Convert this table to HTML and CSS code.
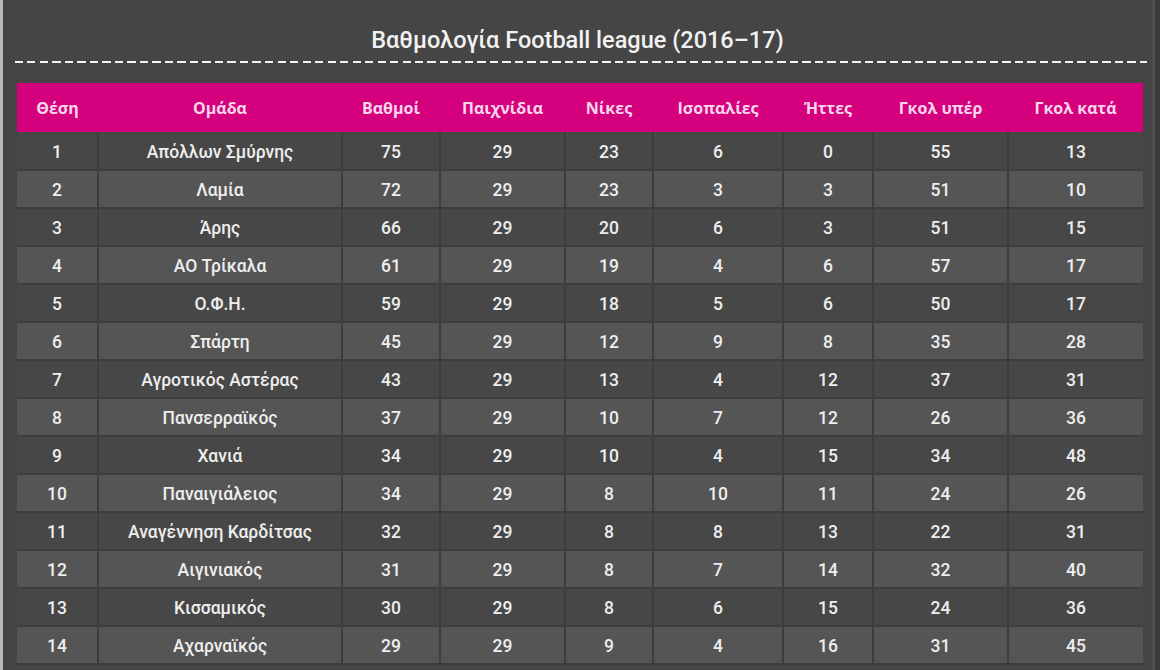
FILE: index.html
```html
<!DOCTYPE html>
<html lang="el">
<head>
<meta charset="utf-8">
<title>Βαθμολογία Football league (2016–17)</title>
<link rel="stylesheet" href="styles.css">
</head>
<body>
<div class="page">
  <h1 class="title">Βαθμολογία Football league (2016–17)</h1>
  <div class="dashes"></div>
  <table class="standings">
    <colgroup>
      <col class="c-pos"><col class="c-team"><col class="c-pts"><col class="c-gp"><col class="c-w"><col class="c-d"><col class="c-l"><col class="c-gf"><col class="c-ga">
    </colgroup>
    <thead>
      <tr><th>Θέση</th><th>Ομάδα</th><th>Βαθμοί</th><th>Παιχνίδια</th><th>Νίκες</th><th>Ισοπαλίες</th><th>Ήττες</th><th>Γκολ υπέρ</th><th>Γκολ κατά</th></tr>
    </thead>
    <tbody>
      <tr><td>1</td><td>Απόλλων Σμύρνης</td><td>75</td><td>29</td><td>23</td><td>6</td><td>0</td><td>55</td><td>13</td></tr>
      <tr><td>2</td><td>Λαμία</td><td>72</td><td>29</td><td>23</td><td>3</td><td>3</td><td>51</td><td>10</td></tr>
      <tr><td>3</td><td>Άρης</td><td>66</td><td>29</td><td>20</td><td>6</td><td>3</td><td>51</td><td>15</td></tr>
      <tr><td>4</td><td>ΑΟ Τρίκαλα</td><td>61</td><td>29</td><td>19</td><td>4</td><td>6</td><td>57</td><td>17</td></tr>
      <tr><td>5</td><td>Ο.Φ.Η.</td><td>59</td><td>29</td><td>18</td><td>5</td><td>6</td><td>50</td><td>17</td></tr>
      <tr><td>6</td><td>Σπάρτη</td><td>45</td><td>29</td><td>12</td><td>9</td><td>8</td><td>35</td><td>28</td></tr>
      <tr><td>7</td><td>Αγροτικός Αστέρας</td><td>43</td><td>29</td><td>13</td><td>4</td><td>12</td><td>37</td><td>31</td></tr>
      <tr><td>8</td><td>Πανσερραϊκός</td><td>37</td><td>29</td><td>10</td><td>7</td><td>12</td><td>26</td><td>36</td></tr>
      <tr><td>9</td><td>Χανιά</td><td>34</td><td>29</td><td>10</td><td>4</td><td>15</td><td>34</td><td>48</td></tr>
      <tr><td>10</td><td>Παναιγιάλειος</td><td>34</td><td>29</td><td>8</td><td>10</td><td>11</td><td>24</td><td>26</td></tr>
      <tr><td>11</td><td>Αναγέννηση Καρδίτσας</td><td>32</td><td>29</td><td>8</td><td>8</td><td>13</td><td>22</td><td>31</td></tr>
      <tr><td>12</td><td>Αιγινιακός</td><td>31</td><td>29</td><td>8</td><td>7</td><td>14</td><td>32</td><td>40</td></tr>
      <tr><td>13</td><td>Κισσαμικός</td><td>30</td><td>29</td><td>8</td><td>6</td><td>15</td><td>24</td><td>36</td></tr>
      <tr><td>14</td><td>Αχαρναϊκός</td><td>29</td><td>29</td><td>9</td><td>4</td><td>16</td><td>31</td><td>45</td></tr>
    </tbody>
  </table>
</div>
</body>
</html>
```

FILE: styles.css
```css
html, body {
  margin: 0;
  padding: 0;
  background: #3c3c3c;
}

.page {
  box-sizing: border-box;
  width: 1155px;
  height: 670px;
  overflow: hidden;
  background: #454545;
  border-left: 3px solid #b9b9b9;
  border-right: 3px solid #505050;
  font-family: Roboto, "Liberation Sans", sans-serif;
  color: #e8e8e8;
}

.title {
  margin: 0;
  padding-top: 24px;
  line-height: 32px;
  font-size: 23.5px;
  font-weight: 500;
  text-align: center;
  color: #f2f2f2;
}

.dashes {
  margin: 5px 5px 0 12px;
  height: 2px;
  background: repeating-linear-gradient(to right, #f4f4f4 0 8px, transparent 8px 12.5px);
}

.standings {
  margin: 20px 0 0 14px;
  width: 1126px;
  table-layout: fixed;
  border-collapse: collapse;
  background: #3f3f3f;
}

.c-pos { width: 81px; }
.c-team { width: 244px; }
.c-pts { width: 98px; }
.c-gp { width: 125px; }
.c-w { width: 88px; }
.c-d { width: 130px; }
.c-l { width: 90px; }
.c-gf { width: 135px; }
.c-ga { width: 135px; }

.standings th {
  height: 49px;
  padding: 0;
  background: #d5007e;
  color: #f7d6ea;
  font-family: "Open Sans", Roboto, sans-serif;
  font-weight: 700;
  font-size: 16px;
  text-align: center;
}

.standings td {
  box-sizing: border-box;
  height: 38px;
  padding: 2px 0 0;
  line-height: 20px;
  text-align: center;
  font-size: 17.5px;
  font-weight: 500;
  color: #eeeeee;
  border: 2px solid #3d3d3d;
  border-top: 0;
  background: #474747;
}

.standings tbody tr:nth-child(even) td {
  background: #555555;
}

.standings tbody tr td:first-child { border-left: 0; }
.standings tbody tr td:last-child { border-right: 0; }
```
